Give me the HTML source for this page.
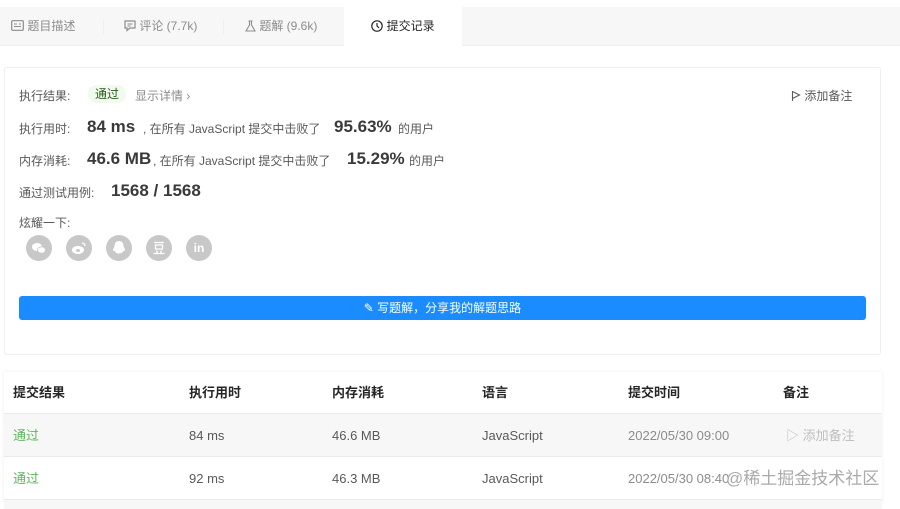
<!DOCTYPE html>
<html><head><meta charset="utf-8"><style>
*{margin:0;padding:0;box-sizing:border-box}
body{width:900px;height:503px;background:#fff;font-family:"Liberation Sans","Noto Sans CJK SC",sans-serif;color:#262626;position:relative;overflow:hidden;font-size:12px}
.a{position:absolute;white-space:nowrap}
.tabs{position:absolute;left:0;top:7px;width:900px;height:39px;background:#f7f7f7;border-bottom:1px solid #eee}
.tab{position:absolute;top:0;height:39px;line-height:39px;color:#8c8c8c;font-size:12px}
.sep{position:absolute;top:13px;width:1px;height:14px;background:#efefef}
.card{position:absolute;left:4px;top:67px;width:877px;height:288px;border:1px solid #efefef;border-radius:3px}
.lbl{color:#595959;font-size:12px}
.big{font-size:17px;font-weight:bold;color:#3a3a3a}
.ico{position:absolute;top:235px;width:26px;height:26px;border-radius:50%;background:#c8c8c8}
.ico svg{position:absolute;left:0;top:0}
.btn{position:absolute;left:19px;top:296px;width:847px;height:24px;background:#1a8cff;border-radius:3px;color:#fff;text-align:center;line-height:24px;font-size:12px}
.tbl{position:absolute;left:4px;top:372px;width:878px;height:131px;box-shadow:0 0 3px rgba(0,0,0,.08)}
.row{position:absolute;left:0;width:878px;height:43px;border-top:1px solid #eaeaea}
.c{position:absolute;top:0;line-height:43px;font-size:13px;color:#595959}
.h .c{font-weight:bold;color:#262626;line-height:41px}
</style></head><body>
<div class="tabs">
 <div class="tab" style="left:11px"><svg width="13" height="11" style="vertical-align:-1px" viewBox="0 0 13 11"><rect x="0.7" y="0.7" width="11.6" height="9.6" rx="1" fill="none" stroke="#8c8c8c" stroke-width="1.2"/><path d="M3 4h3M3 6.5h7M8 4h2" stroke="#8c8c8c"/></svg> 题目描述</div>
 <div class="sep" style="left:103px"></div>
 <div class="tab" style="left:124px"><svg width="12" height="12" style="vertical-align:-2px" viewBox="0 0 12 12"><path d="M1 1h10v7H6l-3 2.5V8H1z" fill="none" stroke="#8c8c8c" stroke-width="1.2"/><path d="M3.5 4h5M3.5 6h3" stroke="#8c8c8c"/></svg> 评论 (7.7k)</div>
 <div class="sep" style="left:223px"></div>
 <div class="tab" style="left:245px"><svg width="11" height="12" style="vertical-align:-2px" viewBox="0 0 11 12"><path d="M3.5 1h4M4.5 1v4L1 11h9L6.5 5V1" fill="none" stroke="#8c8c8c" stroke-width="1.1"/></svg> 题解 (9.6k)</div>
 <div class="tab" style="left:344px;width:118px;background:#fff;color:#262626;text-align:center;height:40px"><svg width="12" height="12" style="vertical-align:-2px" viewBox="0 0 12 12"><circle cx="6" cy="6" r="5.2" fill="none" stroke="#262626" stroke-width="1.2"/><path d="M6 3v3l2 2" fill="none" stroke="#262626" stroke-width="1.2"/></svg> 提交记录</div>
</div>
<div class="card"></div>
<div class="a lbl" style="left:19px;top:87px">执行结果:</div>
<div class="a" style="left:88px;top:85px;background:#f2f9ee;color:#2c5b1c;padding:0 7px;line-height:18px;border-radius:9px">通过</div>
<div class="a" style="left:135px;top:87px;color:#8c8c8c">显示详情 ›</div>
<div class="a" style="left:791px;top:87px;color:#595959"><svg width="10" height="11" viewBox="0 0 10 11" style="vertical-align:-1px"><path d="M1.5 1v10M1.5 1.5l7 3.5-7 3.5" fill="none" stroke="#595959" stroke-width="1.1"/></svg> 添加备注</div>
<div class="a lbl" style="left:19px;top:120px">执行用时:</div>
<div class="a big" style="left:87px;top:117px">84 ms</div>
<div class="a lbl" style="left:143px;top:120px">, 在所有 JavaScript 提交中击败了</div>
<div class="a big" style="left:334px;top:117px">95.63%</div>
<div class="a lbl" style="left:398px;top:120px">的用户</div>
<div class="a lbl" style="left:19px;top:152px">内存消耗:</div>
<div class="a big" style="left:87px;top:149px">46.6 MB</div>
<div class="a lbl" style="left:153px;top:152px">, 在所有 JavaScript 提交中击败了</div>
<div class="a big" style="left:347px;top:149px">15.29%</div>
<div class="a lbl" style="left:409px;top:152px">的用户</div>
<div class="a lbl" style="left:19px;top:184px">通过测试用例:</div>
<div class="a big" style="left:111px;top:181px">1568 / 1568</div>
<div class="a lbl" style="left:19px;top:214px">炫耀一下:</div>
<div class="ico" style="left:26px"><svg width="26" height="26"><ellipse cx="11" cy="12" rx="5" ry="4" fill="#fff"/><ellipse cx="15.5" cy="15" rx="4" ry="3.2" fill="#fff" stroke="#c8c8c8" stroke-width="0.8"/></svg></div>
<div class="ico" style="left:66px"><svg width="26" height="26"><ellipse cx="12" cy="15" rx="6" ry="4" fill="#fff"/><ellipse cx="12" cy="15.5" rx="2" ry="1.5" fill="#c8c8c8"/><path d="M16 8a3 3 0 0 1 3 3" stroke="#fff" stroke-width="1.3" fill="none"/></svg></div>
<div class="ico" style="left:106px"><svg width="26" height="26"><path d="M13 6c-3 0-4.5 2.2-4.5 5 0 1-1.5 2.5-1.5 4s1 1 1.5 .5c.5 2 2.5 3 4.5 3s4-1 4.5-3c.5.5 1.5 1 1.5-.5s-1.5-3-1.5-4c0-2.8-1.5-5-4.5-5z" fill="#fff"/></svg></div>
<div class="ico" style="left:146px"><svg width="26" height="26"><path d="M8 7.5h10M9.5 10h7v4h-7zM10.5 15.5l1 2.5M15.5 15.5l-1 2.5M7.5 18.5h11" stroke="#fff" stroke-width="1.3" fill="none"/></svg></div>
<div class="ico" style="left:186px;color:#fff;text-align:center;line-height:26px;font-weight:bold;font-size:12px">in</div>
<div class="btn">✎ 写题解，分享我的解题思路</div>
<div class="tbl">
 <div class="row h" style="top:0;border-top:none;height:41px"><div class="c" style="left:9px">提交结果</div><div class="c" style="left:185px">执行用时</div><div class="c" style="left:328px">内存消耗</div><div class="c" style="left:478px">语言</div><div class="c" style="left:624px">提交时间</div><div class="c" style="left:779px">备注</div></div>
 <div class="row" style="top:41px;background:#f7f7f7"><div class="c" style="left:9px;color:#5cb85c">通过</div><div class="c" style="left:185px">84 ms</div><div class="c" style="left:328px">46.6 MB</div><div class="c" style="left:478px">JavaScript</div><div class="c" style="left:624px;color:#8c8c8c">2022/05/30 09:00</div><div class="c" style="left:782px;color:#bfbfbf">▷ 添加备注</div></div>
 <div class="row" style="top:84px"><div class="c" style="left:9px;color:#5cb85c">通过</div><div class="c" style="left:185px">92 ms</div><div class="c" style="left:328px">46.3 MB</div><div class="c" style="left:478px">JavaScript</div><div class="c" style="left:624px;color:#8c8c8c">2022/05/30 08:40</div><div class="c" style="left:722px;color:#aaa;font-size:17px">@稀土掘金技术社区</div></div>
 <div class="row" style="top:127px;background:#f7f7f7;height:10px"></div>
</div>
</body></html>
